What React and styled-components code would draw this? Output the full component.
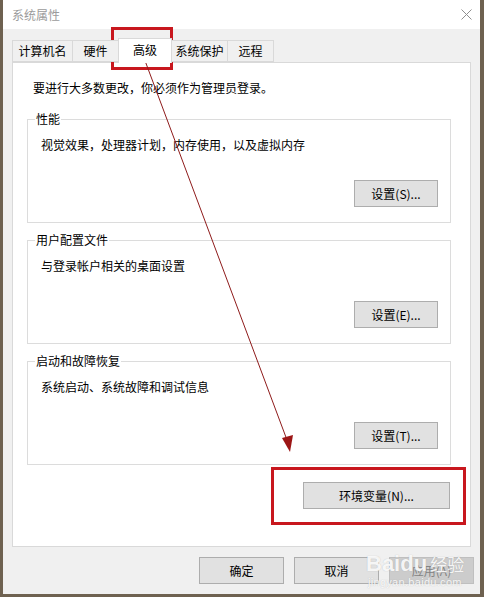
import React from "react";
import styled, { createGlobalStyle } from "styled-components";

const Global = createGlobalStyle`
  html, body { margin: 0; padding: 0; background: #6e6150; }
  * { box-sizing: border-box; }
  body { font-family: "Noto Sans CJK SC", "Noto Sans", "Liberation Sans", sans-serif; font-size: 12px; color: #000; }
`;

const Page = styled.div`
  position: relative;
  width: 484px;
  height: 597px;
  padding: 0 4px 3px 3px;
  background: #6e6150;
  overflow: hidden;
`;

const Window = styled.div`
  width: 477px;
  height: 594px;
  background: #f0f0f0;
  display: flex;
  flex-direction: column;
`;

const TitleBar = styled.div`
  height: 29px;
  flex: none;
  background: #ffffff;
  display: flex;
  align-items: center;
  justify-content: space-between;
  padding: 0 8px 0 9px;
`;

const Title = styled.span`
  font-size: 12px;
  line-height: 16px;
  color: #9b9b9b;
`;

const Body = styled.div`
  flex: 1;
  display: flex;
  flex-direction: column;
  padding: 11px 9px 10px 9px;
`;

const TabRow = styled.div`
  height: 22px;
  display: flex;
  align-items: flex-end;
  flex: none;
`;

const Tab = styled.div`
  position: relative;
  width: ${(p) => p.$w}px;
  height: ${(p) => (p.$active ? 25 : 22)}px;
  margin-left: ${(p) => (p.$first ? 0 : -1)}px;
  margin-bottom: ${(p) => (p.$active ? -1 : 0)}px;
  z-index: ${(p) => (p.$active ? 2 : 1)};
  border: 1px solid #d9d9d9;
  border-bottom: ${(p) => (p.$active ? "none" : "1px solid #d9d9d9")};
  background: ${(p) => (p.$active ? "#ffffff" : "#f0f0f0")};
  display: flex;
  align-items: center;
  justify-content: center;
  padding-bottom: ${(p) => (p.$active ? 2 : 0)}px;
  font-size: 12px;
  line-height: 16px;
`;

const Panel = styled.div`
  height: 485px;
  flex: none;
  background: #ffffff;
  border: 1px solid #d9d9d9;
  padding: 17px 19px 0 14px;
  display: flex;
  flex-direction: column;
`;

const Intro = styled.div`
  line-height: 16px;
  padding-left: 6px;
`;

const Group = styled.div`
  position: relative;
  margin-top: ${(p) => p.$mt}px;
  border: 1px solid #dcdcdc;
  padding: 17px 12px 15px 12px;
  display: flex;
  flex-direction: column;
`;

const Legend = styled.span`
  position: absolute;
  top: -9px;
  left: 7px;
  background: #ffffff;
  padding: 0 1px;
  line-height: 16px;
`;

const Desc = styled.div`
  line-height: 16px;
  padding-left: 1px;
`;

const ButtonRow = styled.div`
  display: flex;
  justify-content: flex-end;
  margin-top: ${(p) => p.$mt || 0}px;
  margin-right: ${(p) => p.$mr || 0}px;
  gap: 10px;
`;

const Button = styled.div`
  width: ${(p) => p.$w}px;
  height: 27px;
  background: ${(p) => (p.$disabled ? "#cccccc" : "#e1e1e1")};
  border: 1px solid ${(p) => (p.$disabled ? "#bfbfbf" : "#adadad")};
  color: ${(p) => (p.$disabled ? "#838383" : "#000000")};
  display: flex;
  align-items: center;
  justify-content: center;
  font-size: 12px;
  line-height: 16px;
`;

const Footer = styled(ButtonRow)`
  margin-top: 10px;
  margin-right: -3px;
`;

const Overlay = styled.div`
  position: absolute;
  inset: 0;
  pointer-events: none;
`;

const RedBox = styled.div`
  position: absolute;
  left: ${(p) => p.$x}px;
  top: ${(p) => p.$y}px;
  width: ${(p) => p.$w}px;
  height: ${(p) => p.$h}px;
  border: 3px solid #c8171e;
`;

const ArrowSvg = styled.svg`
  position: absolute;
  left: 0;
  top: 0;
`;

const Watermark = styled.div`
  position: absolute;
  left: 366px;
  top: 552px;
  display: flex;
  flex-direction: column;
  align-items: flex-start;
  color: rgba(255, 255, 255, 0.9);
  text-shadow: 0 0 1px rgba(150, 150, 150, 0.6);
  font-family: "Liberation Sans", "Noto Sans CJK SC", sans-serif;
`;

const MarkTop = styled.div`
  display: flex;
  align-items: flex-end;
  font-size: 22px;
  line-height: 24px;
  font-weight: bold;
`;

const MarkCn = styled.span`
  font-family: "Noto Sans CJK SC", sans-serif;
  font-size: 17px;
  margin-left: 3px;
  font-weight: normal;
`;

const MarkUrl = styled.div`
  font-size: 11px;
  line-height: 13px;
  letter-spacing: 0.3px;
  margin-left: 2px;
`;

const tabs = [
  { label: "计算机名", w: 61 },
  { label: "硬件", w: 47 },
  { label: "高级", w: 54, active: true },
  { label: "系统保护", w: 57 },
  { label: "远程", w: 47 },
];

const groups = [
  { title: "性能", desc: "视觉效果，处理器计划，内存使用，以及虚拟内存", btn: "设置(S)...", mt: 23 },
  { title: "用户配置文件", desc: "与登录帐户相关的桌面设置", btn: "设置(E)...", mt: 17 },
  { title: "启动和故障恢复", desc: "系统启动、系统故障和调试信息", btn: "设置(T)...", mt: 17 },
];

export default function App() {
  return (
    <>
      <Global />
      <Page>
        <Window>
          <TitleBar>
            <Title>系统属性</Title>
            <svg width="11" height="11" viewBox="0 0 11 11">
              <path d="M0.5 0.5 L10.5 10.5 M10.5 0.5 L0.5 10.5" stroke="#8f8f8f" strokeWidth="1" />
            </svg>
          </TitleBar>
          <Body>
            <TabRow>
              {tabs.map((t, i) => (
                <Tab key={t.label} $w={t.w} $active={t.active} $first={i === 0}>
                  {t.label}
                </Tab>
              ))}
            </TabRow>
            <Panel>
              <Intro>要进行大多数更改，你必须作为管理员登录。</Intro>
              {groups.map((g) => (
                <Group key={g.title} $mt={g.mt}>
                  <Legend>{g.title}</Legend>
                  <Desc>{g.desc}</Desc>
                  <ButtonRow $mt={27}>
                    <Button $w={84}>{g.btn}</Button>
                  </ButtonRow>
                </Group>
              ))}
              <ButtonRow $mt={17} $mr={1}>
                <Button $w={147}>环境变量(N)...</Button>
              </ButtonRow>
            </Panel>
            <Footer>
              <Button $w={85}>确定</Button>
              <Button $w={85}>取消</Button>
              <Button $w={85} $disabled>应用(A)</Button>
            </Footer>
          </Body>
        </Window>
        <Overlay>
          <RedBox $x={111} $y={27} $w={62} $h={43} />
          <RedBox $x={271} $y={467} $w={195} $h={58} />
          <ArrowSvg width="484" height="597" viewBox="0 0 484 597">
            <line x1="144" y1="58" x2="287" y2="440" stroke="#8e1b1b" strokeWidth="1" />
            <polygon points="290,452 282,438 293,435" fill="#9c1515" />
          </ArrowSvg>
          <Watermark>
            <MarkTop>
              <span>Bai</span>
              <span>du</span>
              <MarkCn>经验</MarkCn>
            </MarkTop>
            <MarkUrl>jingyan.baidu.com</MarkUrl>
          </Watermark>
        </Overlay>
      </Page>
    </>
  );
}
